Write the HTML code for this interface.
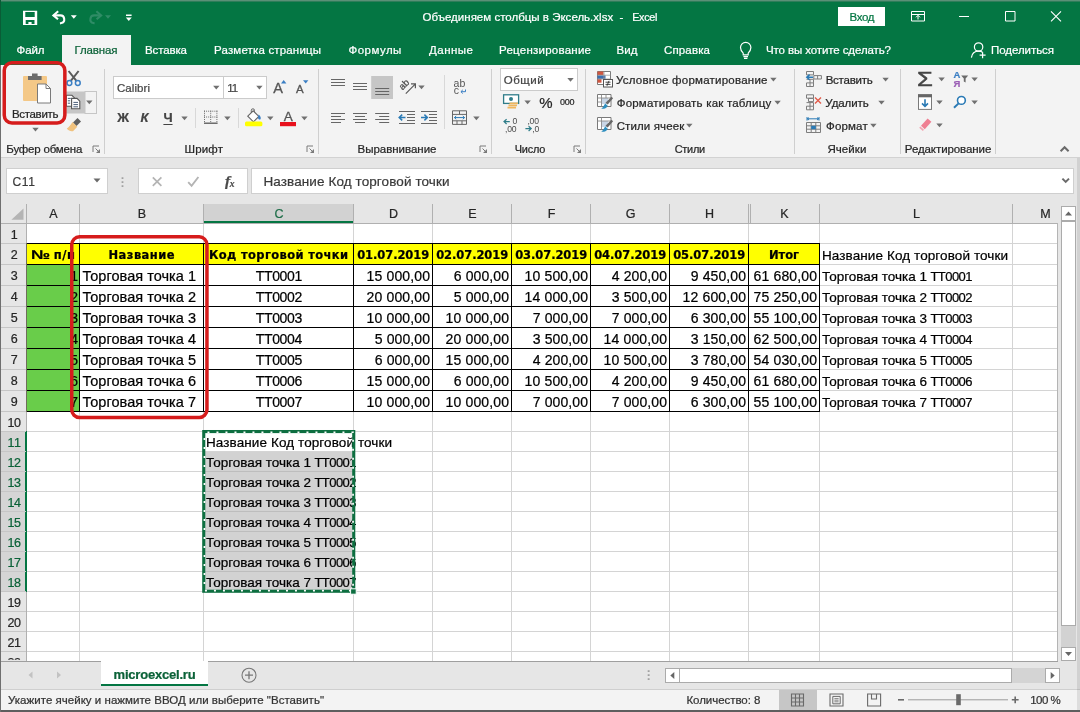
<!DOCTYPE html>
<html lang="ru">
<head>
<meta charset="utf-8">
<title>Объединяем столбцы в Эксель.xlsx - Excel</title>
<style>
html,body{margin:0;padding:0;}
body{width:1080px;height:712px;overflow:hidden;position:relative;background:#fff;font-family:"Liberation Sans",sans-serif;}
#app{position:absolute;left:0;top:0;width:1080px;height:712px;overflow:hidden;will-change:transform;}
#app div,#app svg,#app span.t{position:absolute;display:block;}
#app span.t{white-space:pre;-webkit-text-stroke:.22px currentColor;}
.ls{font-family:"Liberation Sans",sans-serif;}
.dj{font-family:"DejaVu Sans",sans-serif;}
.lserif{font-family:"Liberation Serif",serif;}
</style>
</head>
<body>
<div id="app">
<div style="left:0px;top:0px;width:1080px;height:65px;background:#047643;"></div>
<div style="left:0px;top:0px;width:1080px;height:1px;background:#5b9077;"></div>
<div style="left:0px;top:1px;width:1080px;height:1px;background:#2f7d5a;"></div>
<div style="left:62px;top:35px;width:69px;height:30px;background:#f3f3f3;"></div>
<span id="t1" class="t ls" style="top:9.2px;font-size:11.5px;line-height:16px;color:#fff;left:422.6px;"><span id="t1_0" style="letter-spacing:0.010px;">Объединяем столбцы в Эксель.xlsx  </span><span id="t1_1" style="letter-spacing:0.789px;">-  </span><span id="t1_2" style="font-size:10.8px;letter-spacing:-0.281px;">Excel</span></span>
<div style="left:838px;top:7px;width:47px;height:19px;background:#fff;"></div>
<span id="t2" class="t ls" style="top:9px;font-size:11.5px;line-height:16px;color:#047643;letter-spacing:-0.339px;left:862px;transform:translateX(-50%);margin-left:-0.170px;">Вход</span>
<span id="t3" class="t ls" style="top:41.5px;font-size:11.5px;line-height:16px;color:#fff;letter-spacing:-0.094px;left:16.5px;">Файл</span>
<span id="t4" class="t ls" style="top:41.5px;font-size:11.5px;line-height:16px;color:#0b6238;letter-spacing:-0.130px;left:74.5px;">Главная</span>
<span id="t5" class="t ls" style="top:41.5px;font-size:11.5px;line-height:16px;color:#fff;letter-spacing:-0.125px;left:145px;">Вставка</span>
<span id="t6" class="t ls" style="top:41.5px;font-size:11.5px;line-height:16px;color:#fff;letter-spacing:0.167px;left:214px;">Разметка страницы</span>
<span id="t7" class="t ls" style="top:41.5px;font-size:11.5px;line-height:16px;color:#fff;letter-spacing:0.492px;left:348.4px;">Формулы</span>
<span id="t8" class="t ls" style="top:41.5px;font-size:11.5px;line-height:16px;color:#fff;letter-spacing:0.487px;left:429px;">Данные</span>
<span id="t9" class="t ls" style="top:41.5px;font-size:11.5px;line-height:16px;color:#fff;letter-spacing:0.245px;left:499px;">Рецензирование</span>
<span id="t10" class="t ls" style="top:41.5px;font-size:11.5px;line-height:16px;color:#fff;left:616.6px;">Вид</span>
<span id="t11" class="t ls" style="top:41.5px;font-size:11.5px;line-height:16px;color:#fff;letter-spacing:0.146px;left:664px;">Справка</span>
<span id="t12" class="t ls" style="top:41.5px;font-size:11.5px;line-height:16px;color:#fff;letter-spacing:-0.102px;left:766px;">Что вы хотите сделать?</span>
<span id="t13" class="t ls" style="top:41.5px;font-size:11.5px;line-height:16px;color:#fff;letter-spacing:-0.057px;left:991px;">Поделиться</span>
<div style="left:0px;top:65px;width:1080px;height:93px;background:#f3f3f3;"></div>
<div style="left:0px;top:157px;width:1080px;height:1px;background:#d2d2d2;"></div>
<div style="left:104px;top:69px;width:1px;height:85px;background:#cfcfcf;"></div>
<div style="left:318px;top:69px;width:1px;height:85px;background:#cfcfcf;"></div>
<div style="left:491px;top:69px;width:1px;height:85px;background:#cfcfcf;"></div>
<div style="left:585px;top:69px;width:1px;height:85px;background:#cfcfcf;"></div>
<div style="left:794px;top:69px;width:1px;height:85px;background:#cfcfcf;"></div>
<div style="left:900px;top:69px;width:1px;height:85px;background:#cfcfcf;"></div>
<div style="left:995px;top:69px;width:1px;height:85px;background:#cfcfcf;"></div>
<div style="left:195px;top:108px;width:1px;height:20px;background:#d8d8d8;"></div>
<div style="left:238px;top:108px;width:1px;height:20px;background:#d8d8d8;"></div>
<div style="left:444px;top:75px;width:1px;height:54px;background:#d8d8d8;"></div>
<span id="t14" class="t ls" style="top:141px;font-size:11.5px;line-height:16px;color:#262626;letter-spacing:-0.196px;left:6.3px;">Буфер обмена</span>
<span id="t15" class="t ls" style="top:141px;font-size:11.5px;line-height:16px;color:#262626;letter-spacing:0.164px;left:184.5px;">Шрифт</span>
<span id="t16" class="t ls" style="top:141px;font-size:11.5px;line-height:16px;color:#262626;letter-spacing:-0.016px;left:357.5px;">Выравнивание</span>
<span id="t17" class="t ls" style="top:141px;font-size:10.93px;line-height:16px;color:#262626;letter-spacing:-0.230px;left:514.8px;">Число</span>
<span id="t18" class="t ls" style="top:141px;font-size:10.91px;line-height:16px;color:#262626;letter-spacing:-0.230px;left:674.7px;">Стили</span>
<span id="t19" class="t ls" style="top:141px;font-size:11.5px;line-height:16px;color:#262626;letter-spacing:0.084px;left:827.4px;">Ячейки</span>
<span id="t20" class="t ls" style="top:141px;font-size:11.5px;line-height:16px;color:#262626;letter-spacing:-0.085px;left:904.8px;">Редактирование</span>
<span id="t21" class="t ls" style="top:105.5px;font-size:11.5px;line-height:16px;color:#262626;letter-spacing:-0.321px;left:35.2px;transform:translateX(-50%);margin-left:-0.161px;">Вставить</span>
<div style="left:113px;top:76px;width:111px;height:23px;background:#fff;box-sizing:border-box;border:1px solid #cbcbcb;"></div>
<div style="left:223px;top:76px;width:44px;height:23px;background:#fff;box-sizing:border-box;border:1px solid #cbcbcb;"></div>
<span id="t22" class="t ls" style="top:79.7px;font-size:11.5px;line-height:16px;color:#444;letter-spacing:0.068px;left:117px;">Calibri</span>
<span id="t23" class="t ls" style="top:79.7px;font-size:11.5px;line-height:16px;color:#444;left:227.2px;letter-spacing:-0.9px;">11</span>
<span id="t24" class="t ls" style="top:79.6px;font-size:14.5px;line-height:16px;color:#555;left:273.2px;-webkit-text-stroke:.3px #555;">A</span>
<span id="t25" class="t ls" style="top:81.6px;font-size:11.5px;line-height:14px;color:#555;left:296px;-webkit-text-stroke:.3px #555;">A</span>
<span id="t26" class="t ls" style="top:108.8px;font-size:13px;line-height:18px;color:#444;font-weight:700;left:117.3px;">Ж</span>
<span id="t27" class="t ls" style="top:108.8px;font-size:13px;line-height:18px;color:#444;font-weight:700;font-style:italic;left:140.6px;">К</span>
<span id="t28" class="t ls" style="top:108.8px;font-size:13px;line-height:18px;color:#444;font-weight:700;left:163.4px;text-decoration:underline;text-underline-offset:1.5px;">Ч</span>
<span id="t29" class="t ls" style="top:109.3px;font-size:13.5px;line-height:16px;color:#555;left:288.3px;transform:translateX(-50%);-webkit-text-stroke:.3px #555;">A</span>
<div style="left:500px;top:68px;width:78px;height:23px;background:#fff;box-sizing:border-box;border:1px solid #cbcbcb;"></div>
<span id="t30" class="t ls" style="top:71.8px;font-size:11.5px;line-height:16px;color:#444;letter-spacing:0.539px;left:503.7px;">Общий</span>
<span id="t31" class="t ls" style="top:94.6px;font-size:15px;line-height:16px;color:#262626;left:545.8px;transform:translateX(-50%);">%</span>
<span id="t32" class="t ls" style="top:95.8px;font-size:9px;line-height:12px;color:#262626;letter-spacing:-0.266px;left:567.2px;transform:translateX(-50%);margin-left:-0.133px;">000</span>
<span id="t33" class="t ls" style="top:71.8px;font-size:11.5px;line-height:16px;color:#262626;letter-spacing:0.236px;left:616px;">Условное форматирование</span>
<span id="t34" class="t ls" style="top:95px;font-size:11.5px;line-height:16px;color:#262626;letter-spacing:0.203px;left:616.7px;">Форматировать как таблицу</span>
<span id="t35" class="t ls" style="top:118px;font-size:11.5px;line-height:16px;color:#262626;letter-spacing:0.113px;left:616.7px;">Стили ячеек</span>
<span id="t36" class="t ls" style="top:71.8px;font-size:11.5px;line-height:16px;color:#262626;letter-spacing:-0.250px;left:825.7px;">Вставить</span>
<span id="t37" class="t ls" style="top:95px;font-size:11.5px;line-height:16px;color:#262626;letter-spacing:-0.068px;left:825.3px;">Удалить</span>
<span id="t38" class="t ls" style="top:118px;font-size:11.5px;line-height:16px;color:#262626;letter-spacing:0.168px;left:826px;">Формат</span>
<span id="t39" class="t ls" style="top:67.9px;font-size:21px;line-height:22px;color:#444;left:924.6px;transform:translateX(-50%);transform:translateX(-50%) scaleX(1.22);-webkit-text-stroke:.5px #444;">Σ</span>
<span id="t40" class="t ls" style="top:69.6px;font-size:9.5px;line-height:10px;color:#3b7fc4;font-weight:700;left:957px;transform:translateX(-50%);">А</span>
<span id="t41" class="t ls" style="top:78.6px;font-size:9.5px;line-height:10px;color:#9b5fb5;font-weight:700;left:957px;transform:translateX(-50%);">Я</span>
<svg style="left:0px;top:0px;" width="1080" height="712" viewBox="0 0 1080 712"><path d="M23 10.8h14.2v14.2h-14.2z M25.3 12.1h9.4v4.9h-9.4z M25.7 20h8.8v4.1h-2.9v-2.1h-3.2v2.1h-2.7z" fill="#fff" fill-rule="evenodd"/><path d="M53.6 15.4h6.6a3.9 3.9 0 0 1 1 7.7l-1.2.3" fill="none" stroke="#fff" stroke-width="2.1"/><path d="M58.2 11.3l-4.8 4.1 4.6 3.9" fill="none" stroke="#fff" stroke-width="2.1"/><path d="M70.8 15.25h6l-3 3.5z" fill="#fff"/><path d="M101 15.4h-6.6a3.9 3.9 0 0 0-1 7.7l1.2.3" fill="none" stroke="#2f8c66" stroke-width="2.1"/><path d="M96.4 11.3l4.8 4.1-4.6 3.9" fill="none" stroke="#2f8c66" stroke-width="2.1"/><path d="M105 15.25h6l-3 3.5z" fill="#2f8c66"/><path d="M126 14.6h5.6v1.3h-5.6z" fill="#fff"/><path d="M125.8 17.5h6l-3 3.4z" fill="#fff"/><path d="M743.2 53.2c-1.6-1.6-2.7-3.4-2.7-5.6a5.2 5.2 0 0 1 10.4 0c0 2.2-1.1 4-2.7 5.6v1.6h-5z" fill="none" stroke="#fff" stroke-width="1.2"/><path d="M743.4 56.6h4.6M744 58.4h3.4" stroke="#fff" stroke-width="1.1"/><circle cx="978.6" cy="47" r="4.2" fill="none" stroke="#fff" stroke-width="1.2"/><path d="M971.4 57.6c0.6-4 3.4-6.4 7.2-6.4 1.6 0 3 .4 4.2 1.2" fill="none" stroke="#fff" stroke-width="1.2"/><path d="M982.6 52.2v6M979.6 55.2h6" stroke="#fff" stroke-width="1.2"/><path d="M911.5 11.5h13v9.5h-13z M911.5 14.5h13" fill="none" stroke="#fff" stroke-width="1"/><path d="M918 19.5v-4M916 17.3l2-2 2 2" fill="none" stroke="#fff" stroke-width="1"/><path d="M959 16.5h10" stroke="#fff" stroke-width="1"/><path d="M1005.5 11.5h9.5v9.5h-9.5z" fill="none" stroke="#fff" stroke-width="1"/><path d="M1051 11.3l10 10M1061 11.3l-10 10" stroke="#fff" stroke-width="1.1"/><path d="M93 152V146H99" fill="none" stroke="#7a7a7a" stroke-width="1"/><path d="M95.5 148.5L99 152" stroke="#7a7a7a" stroke-width="1"/><path d="M100 149V153H96z" fill="#7a7a7a"/><path d="M307 152V146H313" fill="none" stroke="#7a7a7a" stroke-width="1"/><path d="M309.5 148.5L313 152" stroke="#7a7a7a" stroke-width="1"/><path d="M314 149V153H310z" fill="#7a7a7a"/><path d="M480 152V146H486" fill="none" stroke="#7a7a7a" stroke-width="1"/><path d="M482.5 148.5L486 152" stroke="#7a7a7a" stroke-width="1"/><path d="M487 149V153H483z" fill="#7a7a7a"/><path d="M574 152V146H580" fill="none" stroke="#7a7a7a" stroke-width="1"/><path d="M576.5 148.5L580 152" stroke="#7a7a7a" stroke-width="1"/><path d="M581 149V153H577z" fill="#7a7a7a"/><path d="M1060.6 151.2l4-4 4 4" fill="none" stroke="#6a6a6a" stroke-width="2"/><rect x="23" y="76" width="24" height="25" rx="1" fill="#f4c887"/><path d="M28 80v-4h4v-2.6h5.6V76h4v4z" fill="#6b6b6b"/><path d="M37.5 84h8.5l4.5 4.5V103h-13z" fill="#fff" stroke="#7a7a7a" stroke-width="1"/><path d="M46 84v4.5h4.5" fill="none" stroke="#7a7a7a" stroke-width="1"/><path d="M32.3 127.85h6.4l-3.2 3.7z" fill="#707070"/><path d="M68.6 71l8.2 10.4M78.6 71l-8.2 10.4" stroke="#5a5a5a" stroke-width="2" fill="none"/><circle cx="69.4" cy="83" r="2.4" fill="#f3f3f3" stroke="#3b7fc4" stroke-width="1.5"/><circle cx="77.8" cy="83" r="2.4" fill="#f3f3f3" stroke="#3b7fc4" stroke-width="1.5"/><rect x="65.5" y="91.5" width="19.5" height="22" fill="#c6c6c6"/><rect x="85" y="91.5" width="11.5" height="22" fill="#f3f3f3" stroke="#c6c6c6" stroke-width="1"/><path d="M66.3 95.3h5.6l2.4 2.4v8.6h-8z" fill="#fff" stroke="#555" stroke-width="1.1"/><path d="M71.6 98.4h5.4l2.8 2.8v7.6h-8.2z" fill="#fff" stroke="#555" stroke-width="1.1"/><path d="M67.8 98.4h3M67.8 100.8h2.4M67.8 103.2h2.4M73.4 102.4h4.6M73.4 104.6h4.6M73.4 106.8h4.6" stroke="#4a5f7a" stroke-width="1"/><path d="M86.1 100.45h6.4l-3.2 3.7z" fill="#707070"/><path d="M77.5 118l3.5 3.5-4.5 4.5-3.5-3.5z" fill="#5f5f5f"/><path d="M72.5 122l4.8 4.8-4.3 4.4c-2 .6-4.6-.4-6.2-2.6 2-1.2 3.6-3.4 5.7-6.6z" fill="#f0c27e"/><path d="M213.1 85.85h6.4l-3.2 3.7z" fill="#707070"/><path d="M256.2 85.85h6.4l-3.2 3.7z" fill="#707070"/><path d="M281 83.5h5.4l-2.7-3.4z" fill="#3b7fc4"/><path d="M303 80.2h5.4l-2.7 3.4z" fill="#3b7fc4"/><path d="M181.3 116.45h6.4l-3.2 3.7z" fill="#707070"/><path d="M204 111.2h13.4M204 117h13.4M204.5 110.7v12M210.7 110.7v12M216.9 110.7v12" fill="none" stroke="#6e6e6e" stroke-width="1" stroke-dasharray="1 1.07"/><path d="M204 123.2h13.6" stroke="#555" stroke-width="1.3"/><path d="M224.2 116.45h6.4l-3.2 3.7z" fill="#707070"/><path d="M247.8 116.2l5.4-5.4 5.6 5.6-5.4 5.4z" fill="#fff" stroke="#666" stroke-width="1.1"/><path d="M251.3 112.6v-2.2a1.6 1.6 0 0 1 3.2 0v1.4" fill="none" stroke="#666" stroke-width="1"/><path d="M258.6 114.6c1.6 1.4 2.6 3 2 4.4-.8 1-2.4.4-2.6-1z" fill="#3b7fc4"/><rect x="245" y="121.6" width="17.4" height="4.6" rx="1.5" fill="#ffff00"/><path d="M267.1 116.45h6.4l-3.2 3.7z" fill="#707070"/><rect x="280" y="122" width="16" height="4.2" fill="#e8101c"/><path d="M301.2 116.45h6.4l-3.2 3.7z" fill="#707070"/><path d="M331 79.5h14" stroke="#666" stroke-width="1"/><path d="M331 82.5h14" stroke="#666" stroke-width="1"/><path d="M331 85.5h14" stroke="#666" stroke-width="1"/><path d="M353 83.5h14" stroke="#666" stroke-width="1"/><path d="M353 86.5h14" stroke="#666" stroke-width="1"/><path d="M353 89.5h14" stroke="#666" stroke-width="1"/><rect x="371.2" y="76" width="21.8" height="23" fill="#c6c6c6"/><path d="M375.2 88.5h14" stroke="#666" stroke-width="1"/><path d="M375.2 91.5h14" stroke="#666" stroke-width="1"/><path d="M375.2 94.5h14" stroke="#666" stroke-width="1"/><path d="M331 113.5h14" stroke="#666" stroke-width="1"/><path d="M331 116.5h10" stroke="#666" stroke-width="1"/><path d="M331 119.5h14" stroke="#666" stroke-width="1"/><path d="M331 122.5h10" stroke="#666" stroke-width="1"/><path d="M353 113.5h14" stroke="#666" stroke-width="1"/><path d="M355 116.5h10" stroke="#666" stroke-width="1"/><path d="M353 119.5h14" stroke="#666" stroke-width="1"/><path d="M355 122.5h10" stroke="#666" stroke-width="1"/><path d="M375.2 113.5h14" stroke="#666" stroke-width="1"/><path d="M379.2 116.5h10" stroke="#666" stroke-width="1"/><path d="M375.2 119.5h14" stroke="#666" stroke-width="1"/><path d="M379.2 122.5h10" stroke="#666" stroke-width="1"/><text transform="translate(402.6 90.6) rotate(-45)" font-family="Liberation Sans,sans-serif" font-size="9.5" fill="#4a4a4a" stroke="#4a4a4a" stroke-width=".25">ab</text><path d="M405.8 93.6l9.4-9.4M411 83.8h4.4v4.4" fill="none" stroke="#5a5a5a" stroke-width="1.2"/><path d="M418.3 85.45h6.4l-3.2 3.7z" fill="#707070"/><text x="453.6" y="87" font-family="Liberation Sans,sans-serif" font-size="10.5" fill="#555">ab</text><text x="453.8" y="94" font-family="Liberation Sans,sans-serif" font-size="10.5" fill="#555">c</text><path d="M465.5 89.5v2.2h-4.5M462.8 89.9l-1.9 1.8 1.9 1.8" fill="none" stroke="#3b7fc4" stroke-width="1"/><path d="M399 111.5h16M407 114.5h8M407 117.5h8M407 120.5h8M399 123.5h16" stroke="#666" stroke-width="1"/><path d="M405.5 117.5h-6M402.2 114.6l-3 2.9 3 2.9" fill="none" stroke="#2a7ab5" stroke-width="1.5"/><path d="M421 111.5h16M429 114.5h8M429 117.5h8M429 120.5h8M421 123.5h16" stroke="#666" stroke-width="1"/><path d="M421 117.5h6M424.4 114.6l3 2.9-3 2.9" fill="none" stroke="#2a7ab5" stroke-width="1.5"/><path d="M452.5 110.8h14v13.6h-14zM452.5 114.4h14M452.5 120.8h14M459.5 110.8v3.6M457 120.8v3.6M462 120.8v3.6" fill="none" stroke="#666" stroke-width="1"/><path d="M454.5 117.6h10M456.2 116l-1.8 1.6 1.8 1.6M462.8 116l1.8 1.6-1.8 1.6" fill="none" stroke="#2a7ab5" stroke-width="1"/><path d="M473.2 116.45h6.4l-3.2 3.7z" fill="#707070"/><path d="M567.3 77.95h6.4l-3.2 3.7z" fill="#707070"/><rect x="503.6" y="94.8" width="15" height="8.6" fill="#fff" stroke="#2f7d89" stroke-width="1.3"/><circle cx="511" cy="99" r="2" fill="#2f7d89"/><path d="M509.5 103.2h8.5M508.5 105.4h8.5M507.5 107.6h8.5" stroke="#f0b75e" stroke-width="1.6"/><path d="M524.4 100.45h6.4l-3.2 3.7z" fill="#707070"/><g font-family="Liberation Sans,sans-serif" font-size="8.6" fill="#4a4a4a" letter-spacing="-.2"><text x="512.4" y="124.4">0</text><text x="505" y="131.6">,00</text><text x="527.4" y="124.4">,00</text><text x="532.2" y="131.6">,0</text></g><path d="M509.8 121.6h-5.6M506.6 119.2l-2.6 2.4 2.6 2.4" fill="none" stroke="#2f7d89" stroke-width="1.2"/><path d="M525.4 128.6h5.6M528.6 126.2l2.6 2.4-2.6 2.4" fill="none" stroke="#2f7d89" stroke-width="1.2"/><path d="M770.2 77.75h6.4l-3.2 3.7z" fill="#707070"/><path d="M774.4 100.75h6.4l-3.2 3.7z" fill="#707070"/><path d="M686.1 123.75h6.4l-3.2 3.7z" fill="#707070"/><path d="M597.5 71.5h13v13h-13z" fill="#fff" stroke="#7a7a7a"/><rect x="597.5" y="71.5" width="6" height="3.6" fill="#d0563f"/><rect x="597.5" y="75.3" width="8" height="3.6" fill="#3b6fb0"/><rect x="597.5" y="79.1" width="4" height="3.6" fill="#d0563f"/><path d="M604 71.5v13M597.5 75.2h13M597.5 79h13" stroke="#9a9a9a" stroke-width=".8" fill="none"/><rect x="603.5" y="79.5" width="9" height="7.5" fill="#fff" stroke="#555"/><path d="M605.5 82.2h5M605.5 84.4h5M609 80.8l-2 5" stroke="#333" stroke-width=".9"/><path d="M597.5 94.5h13.5v12h-13.5z" fill="#fff" stroke="#7a7a7a"/><rect x="601" y="98.0" width="7" height="6" fill="#c9d6e6"/><path d="M597.5 98.0h13.5M601.5 94.5v12M606 94.5v3.5M597.5 102.0h4" stroke="#8a8a8a" stroke-width=".9" fill="none"/><path d="M611.5 96.7l1.6 1.6-5.4 6.2-2.2-1.8z" fill="#666"/><path d="M605.2 103.5l2.6 2.2c-1.4 2.6-4.2 3.6-6.6 3 1.8-1.2 2.6-3 4-5.2z" fill="#2f8fbf"/><path d="M597.5 117.5h13.5v12h-13.5z" fill="#fff" stroke="#7a7a7a"/><rect x="601" y="121.0" width="7" height="6" fill="#c9d6e6"/><path d="M597.5 121.0h13.5M601.5 117.5v12" stroke="#8a8a8a" stroke-width=".9" fill="none"/><path d="M611.5 119.7l1.6 1.6-5.4 6.2-2.2-1.8z" fill="#666"/><path d="M605.2 126.5l2.6 2.2c-1.4 2.6-4.2 3.6-6.6 3 1.8-1.2 2.6-3 4-5.2z" fill="#2f8fbf"/><path d="M882.4 77.75h6.4l-3.2 3.7z" fill="#707070"/><path d="M878.3 100.75h6.4l-3.2 3.7z" fill="#707070"/><path d="M870.2 123.75h6.4l-3.2 3.7z" fill="#707070"/><path d="M806.5 71.5h7v3.4h-7zM806.5 79.3h7v3.6h-7v3.6h7v-3.6M810 79.3v7.2M813.8 75.6h7.6v3.4h-7.6zM817.6 75.6v3.4" fill="none" stroke="#7d7d7d" stroke-width="1"/><path d="M813 77.2h-6M809.6 74.6l-2.8 2.6 2.8 2.6" fill="none" stroke="#2a7ab5" stroke-width="1.5"/><path d="M806.5 94.8h7v3.4h-7zM806.5 102.6h7v3.6h-7v3.6h7v-3.6M810 102.6v7.2M808.5 98.4h5v3.2h-5z" fill="none" stroke="#7d7d7d" stroke-width="1"/><path d="M815 97.6l6 6M821 97.6l-6 6" stroke="#e25b4a" stroke-width="1.4"/><path d="M806.5 122.5h14v10h-14zM806.5 125.8h14M806.5 129.2h14M811.2 122.5v10M815.8 122.5v10" fill="none" stroke="#7d7d7d" stroke-width="1"/><rect x="811.2" y="125.8" width="4.6" height="3.4" fill="#2a7ab5"/><path d="M807 118.8h12M807 117v3.6M819 117v3.6M809 117.6l-1.6 1.2 1.6 1.2M817 117.6l1.6 1.2-1.6 1.2" fill="none" stroke="#2a7ab5" stroke-width="1"/><path d="M938.4 77.55h6.4l-3.2 3.7z" fill="#707070"/><path d="M961.2 75.4h7l-2.6 3v4l-1.8-1v-3z" fill="#6a6a6a"/><path d="M971.4 77.55h6.4l-3.2 3.7z" fill="#707070"/><rect x="918.5" y="94.8" width="13" height="14.6" fill="#fff" stroke="#7a7a7a"/><rect x="918" y="94.3" width="14" height="3" fill="#666"/><path d="M925 99.2v7M922 103.4l3 3 3-3" fill="none" stroke="#2a7ab5" stroke-width="1.6"/><path d="M936.3 100.45h6.4l-3.2 3.7z" fill="#707070"/><circle cx="961.4" cy="100.4" r="3.9" fill="#fff" stroke="#2a7ab5" stroke-width="1.6"/><path d="M958.6 103.4l-4.6 4.4" stroke="#2a7ab5" stroke-width="2"/><path d="M971.4 100.45h6.4l-3.2 3.7z" fill="#707070"/><path d="M927.6 118.4l3.8 3.4-6.6 7.4-3.8-3.4z" fill="#ef7f92"/><path d="M920.4 126.6l3.6 3.2-1.2 1.2-3.6-3.2z" fill="#f3a5b2"/><path d="M936.3 123.55h6.4l-3.2 3.7z" fill="#707070"/></svg>
<div style="left:0px;top:158px;width:1080px;height:46px;background:#e6e6e6;"></div>
<div style="left:6px;top:168px;width:102px;height:25.5px;background:#fff;box-sizing:border-box;border:1px solid #cfcfcf;"></div>
<span id="t42" class="t ls" style="top:173.5px;font-size:12px;line-height:17px;color:#3a3a3a;letter-spacing:0.688px;left:12.5px;">C11</span>
<div style="left:138px;top:168px;width:110px;height:25.5px;background:#fff;box-sizing:border-box;border:1px solid #cfcfcf;"></div>
<div style="left:251px;top:168px;width:823px;height:25.5px;background:#fff;box-sizing:border-box;border:1px solid #cfcfcf;"></div>
<span id="t43" class="t ls" style="top:172px;font-size:13.5px;line-height:19px;color:#3a3a3a;letter-spacing:0.096px;left:263.5px;">Название Код торговой точки</span>
<svg style="left:0px;top:158px;" width="1080" height="46" viewBox="0 0 1080 46"><path d="M93.5 20.5h7l-3.5 4z" fill="#6a6a6a"/><path d="M121.6 19.3h1.8v1.8h-1.8zM121.6 23.3h1.8v1.8h-1.8zM121.6 27.3h1.8v1.8h-1.8z" fill="#a0a0a0"/><path d="M152.8 19.3l8.6 8.6M161.4 19.3l-8.6 8.6" stroke="#b4b4b4" stroke-width="1.7"/><path d="M188.2 24.2l3.4 3.6 6.8-8.8" fill="none" stroke="#b4b4b4" stroke-width="1.9"/><path d="M1062.4 20.6l3.3 3.3 3.3-3.3" fill="none" stroke="#6a6a6a" stroke-width="2"/></svg>
<span id="t44" class="t lserif" style="top:171.6px;font-size:15.5px;line-height:18px;color:#4a4a4a;font-weight:700;font-style:italic;left:227.6px;transform:translateX(-50%);">f</span>
<span id="t45" class="t lserif" style="top:177.6px;font-size:9.5px;line-height:12px;color:#4a4a4a;font-weight:700;font-style:italic;left:232.2px;transform:translateX(-50%);">x</span>
<div style="left:0px;top:204px;width:1060px;height:457px;background:#fff;"></div>
<div style="left:0px;top:204px;width:1060px;height:19px;background:#e6e6e6;"></div>
<div style="left:0px;top:204px;width:26px;height:457px;background:#e6e6e6;"></div>
<div style="left:204px;top:204px;width:150px;height:19px;background:#d2d2d2;"></div>
<div style="left:204px;top:221px;width:150px;height:2px;background:#047643;"></div>
<div style="left:0px;top:432px;width:26px;height:159px;background:#d5d5d5;"></div>
<div style="left:0px;top:223px;width:1060px;height:1px;background:#b0b0b0;"></div>
<div style="left:26px;top:204px;width:1px;height:457px;background:#b0b0b0;"></div>
<div style="left:25px;top:431px;width:2px;height:161px;background:#047643;"></div>
<div style="left:79px;top:204px;width:1px;height:19px;background:#b0b0b0;"></div>
<div style="left:203px;top:204px;width:1px;height:19px;background:#b0b0b0;"></div>
<div style="left:353px;top:204px;width:1px;height:19px;background:#b0b0b0;"></div>
<div style="left:432px;top:204px;width:1px;height:19px;background:#b0b0b0;"></div>
<div style="left:511px;top:204px;width:1px;height:19px;background:#b0b0b0;"></div>
<div style="left:590px;top:204px;width:1px;height:19px;background:#b0b0b0;"></div>
<div style="left:669px;top:204px;width:1px;height:19px;background:#b0b0b0;"></div>
<div style="left:748px;top:204px;width:1px;height:19px;background:#b0b0b0;"></div>
<div style="left:819px;top:204px;width:1px;height:19px;background:#b0b0b0;"></div>
<div style="left:1012px;top:204px;width:1px;height:19px;background:#b0b0b0;"></div>
<div style="left:750px;top:204px;width:1px;height:19px;background:#b0b0b0;"></div>
<div style="left:27px;top:243px;width:1032px;height:1px;background:#d4d4d4;"></div>
<div style="left:0px;top:243px;width:26px;height:1px;background:#c6c6c6;"></div>
<div style="left:27px;top:264px;width:1032px;height:1px;background:#d4d4d4;"></div>
<div style="left:0px;top:264px;width:26px;height:1px;background:#c6c6c6;"></div>
<div style="left:27px;top:285px;width:1032px;height:1px;background:#d4d4d4;"></div>
<div style="left:0px;top:285px;width:26px;height:1px;background:#c6c6c6;"></div>
<div style="left:27px;top:306px;width:1032px;height:1px;background:#d4d4d4;"></div>
<div style="left:0px;top:306px;width:26px;height:1px;background:#c6c6c6;"></div>
<div style="left:27px;top:327px;width:1032px;height:1px;background:#d4d4d4;"></div>
<div style="left:0px;top:327px;width:26px;height:1px;background:#c6c6c6;"></div>
<div style="left:27px;top:348px;width:1032px;height:1px;background:#d4d4d4;"></div>
<div style="left:0px;top:348px;width:26px;height:1px;background:#c6c6c6;"></div>
<div style="left:27px;top:369px;width:1032px;height:1px;background:#d4d4d4;"></div>
<div style="left:0px;top:369px;width:26px;height:1px;background:#c6c6c6;"></div>
<div style="left:27px;top:390px;width:1032px;height:1px;background:#d4d4d4;"></div>
<div style="left:0px;top:390px;width:26px;height:1px;background:#c6c6c6;"></div>
<div style="left:27px;top:411px;width:1032px;height:1px;background:#d4d4d4;"></div>
<div style="left:0px;top:411px;width:26px;height:1px;background:#c6c6c6;"></div>
<div style="left:27px;top:431px;width:1032px;height:1px;background:#d4d4d4;"></div>
<div style="left:0px;top:431px;width:26px;height:1px;background:#c6c6c6;"></div>
<div style="left:27px;top:451px;width:1032px;height:1px;background:#d4d4d4;"></div>
<div style="left:0px;top:451px;width:26px;height:1px;background:#c6c6c6;"></div>
<div style="left:27px;top:471px;width:1032px;height:1px;background:#d4d4d4;"></div>
<div style="left:0px;top:471px;width:26px;height:1px;background:#c6c6c6;"></div>
<div style="left:27px;top:491px;width:1032px;height:1px;background:#d4d4d4;"></div>
<div style="left:0px;top:491px;width:26px;height:1px;background:#c6c6c6;"></div>
<div style="left:27px;top:511px;width:1032px;height:1px;background:#d4d4d4;"></div>
<div style="left:0px;top:511px;width:26px;height:1px;background:#c6c6c6;"></div>
<div style="left:27px;top:531px;width:1032px;height:1px;background:#d4d4d4;"></div>
<div style="left:0px;top:531px;width:26px;height:1px;background:#c6c6c6;"></div>
<div style="left:27px;top:551px;width:1032px;height:1px;background:#d4d4d4;"></div>
<div style="left:0px;top:551px;width:26px;height:1px;background:#c6c6c6;"></div>
<div style="left:27px;top:571px;width:1032px;height:1px;background:#d4d4d4;"></div>
<div style="left:0px;top:571px;width:26px;height:1px;background:#c6c6c6;"></div>
<div style="left:27px;top:591px;width:1032px;height:1px;background:#d4d4d4;"></div>
<div style="left:0px;top:591px;width:26px;height:1px;background:#c6c6c6;"></div>
<div style="left:27px;top:611px;width:1032px;height:1px;background:#d4d4d4;"></div>
<div style="left:0px;top:611px;width:26px;height:1px;background:#c6c6c6;"></div>
<div style="left:27px;top:631px;width:1032px;height:1px;background:#d4d4d4;"></div>
<div style="left:0px;top:631px;width:26px;height:1px;background:#c6c6c6;"></div>
<div style="left:27px;top:651px;width:1032px;height:1px;background:#d4d4d4;"></div>
<div style="left:0px;top:651px;width:26px;height:1px;background:#c6c6c6;"></div>
<div style="left:79px;top:224px;width:1px;height:437px;background:#d4d4d4;"></div>
<div style="left:203px;top:224px;width:1px;height:437px;background:#d4d4d4;"></div>
<div style="left:353px;top:224px;width:1px;height:437px;background:#d4d4d4;"></div>
<div style="left:432px;top:224px;width:1px;height:437px;background:#d4d4d4;"></div>
<div style="left:511px;top:224px;width:1px;height:437px;background:#d4d4d4;"></div>
<div style="left:590px;top:224px;width:1px;height:437px;background:#d4d4d4;"></div>
<div style="left:669px;top:224px;width:1px;height:437px;background:#d4d4d4;"></div>
<div style="left:748px;top:224px;width:1px;height:437px;background:#d4d4d4;"></div>
<div style="left:819px;top:224px;width:1px;height:437px;background:#d4d4d4;"></div>
<div style="left:1012px;top:224px;width:1px;height:437px;background:#d4d4d4;"></div>
<span id="t46" class="t ls" style="top:205px;font-size:12.5px;line-height:18px;color:#262626;left:53.5px;transform:translateX(-50%);">A</span>
<span id="t47" class="t ls" style="top:205px;font-size:12.5px;line-height:18px;color:#262626;left:142px;transform:translateX(-50%);">B</span>
<span id="t48" class="t ls" style="top:205px;font-size:12.5px;line-height:18px;color:#1f6e49;left:279px;transform:translateX(-50%);">C</span>
<span id="t49" class="t ls" style="top:205px;font-size:12.5px;line-height:18px;color:#262626;left:393.5px;transform:translateX(-50%);">D</span>
<span id="t50" class="t ls" style="top:205px;font-size:12.5px;line-height:18px;color:#262626;left:472.5px;transform:translateX(-50%);">E</span>
<span id="t51" class="t ls" style="top:205px;font-size:12.5px;line-height:18px;color:#262626;left:551.5px;transform:translateX(-50%);">F</span>
<span id="t52" class="t ls" style="top:205px;font-size:12.5px;line-height:18px;color:#262626;left:630.5px;transform:translateX(-50%);">G</span>
<span id="t53" class="t ls" style="top:205px;font-size:12.5px;line-height:18px;color:#262626;left:709.5px;transform:translateX(-50%);">H</span>
<span id="t54" class="t ls" style="top:205px;font-size:12.5px;line-height:18px;color:#262626;left:784.5px;transform:translateX(-50%);">K</span>
<span id="t55" class="t ls" style="top:205px;font-size:12.5px;line-height:18px;color:#262626;left:916.5px;transform:translateX(-50%);">L</span>
<span id="t56" class="t ls" style="top:205px;font-size:12.5px;line-height:18px;color:#262626;left:1045.5px;transform:translateX(-50%);">M</span>
<span id="t57" class="t ls" style="top:225.8px;font-size:12.5px;line-height:18px;color:#262626;left:14.2px;transform:translateX(-50%);">1</span>
<span id="t58" class="t ls" style="top:246.3px;font-size:12.5px;line-height:18px;color:#262626;left:14.2px;transform:translateX(-50%);">2</span>
<span id="t59" class="t ls" style="top:267.3px;font-size:12.5px;line-height:18px;color:#262626;left:14.2px;transform:translateX(-50%);">3</span>
<span id="t60" class="t ls" style="top:288.3px;font-size:12.5px;line-height:18px;color:#262626;left:14.2px;transform:translateX(-50%);">4</span>
<span id="t61" class="t ls" style="top:309.3px;font-size:12.5px;line-height:18px;color:#262626;left:14.2px;transform:translateX(-50%);">5</span>
<span id="t62" class="t ls" style="top:330.3px;font-size:12.5px;line-height:18px;color:#262626;left:14.2px;transform:translateX(-50%);">6</span>
<span id="t63" class="t ls" style="top:351.3px;font-size:12.5px;line-height:18px;color:#262626;left:14.2px;transform:translateX(-50%);">7</span>
<span id="t64" class="t ls" style="top:372.3px;font-size:12.5px;line-height:18px;color:#262626;left:14.2px;transform:translateX(-50%);">8</span>
<span id="t65" class="t ls" style="top:393.3px;font-size:12.5px;line-height:18px;color:#262626;left:14.2px;transform:translateX(-50%);">9</span>
<span id="t66" class="t ls" style="top:413.8px;font-size:12.5px;line-height:18px;color:#262626;letter-spacing:-0.606px;left:14.2px;transform:translateX(-50%);margin-left:-0.303px;">10</span>
<span id="t67" class="t ls" style="top:433.8px;font-size:12.5px;line-height:18px;color:#0b6238;letter-spacing:0.316px;left:14.2px;transform:translateX(-50%);margin-left:0.158px;">11</span>
<span id="t68" class="t ls" style="top:453.8px;font-size:12.5px;line-height:18px;color:#0b6238;letter-spacing:-0.606px;left:14.2px;transform:translateX(-50%);margin-left:-0.303px;">12</span>
<span id="t69" class="t ls" style="top:473.8px;font-size:12.5px;line-height:18px;color:#0b6238;letter-spacing:-0.606px;left:14.2px;transform:translateX(-50%);margin-left:-0.303px;">13</span>
<span id="t70" class="t ls" style="top:493.8px;font-size:12.5px;line-height:18px;color:#0b6238;letter-spacing:-0.606px;left:14.2px;transform:translateX(-50%);margin-left:-0.303px;">14</span>
<span id="t71" class="t ls" style="top:513.8px;font-size:12.5px;line-height:18px;color:#0b6238;letter-spacing:-0.606px;left:14.2px;transform:translateX(-50%);margin-left:-0.303px;">15</span>
<span id="t72" class="t ls" style="top:533.8px;font-size:12.5px;line-height:18px;color:#0b6238;letter-spacing:-0.606px;left:14.2px;transform:translateX(-50%);margin-left:-0.303px;">16</span>
<span id="t73" class="t ls" style="top:553.8px;font-size:12.5px;line-height:18px;color:#0b6238;letter-spacing:-0.606px;left:14.2px;transform:translateX(-50%);margin-left:-0.303px;">17</span>
<span id="t74" class="t ls" style="top:573.8px;font-size:12.5px;line-height:18px;color:#0b6238;letter-spacing:-0.606px;left:14.2px;transform:translateX(-50%);margin-left:-0.303px;">18</span>
<span id="t75" class="t ls" style="top:593.8px;font-size:12.5px;line-height:18px;color:#262626;letter-spacing:-0.606px;left:14.2px;transform:translateX(-50%);margin-left:-0.303px;">19</span>
<span id="t76" class="t ls" style="top:613.8px;font-size:12.5px;line-height:18px;color:#262626;letter-spacing:-0.606px;left:14.2px;transform:translateX(-50%);margin-left:-0.303px;">20</span>
<span id="t77" class="t ls" style="top:633.8px;font-size:12.5px;line-height:18px;color:#262626;letter-spacing:-0.606px;left:14.2px;transform:translateX(-50%);margin-left:-0.303px;">21</span>
<span id="t78" class="t ls" style="top:653.8px;font-size:12.5px;line-height:18px;color:#262626;letter-spacing:-0.606px;left:14.2px;transform:translateX(-50%);margin-left:-0.303px;clip-path:inset(0 0 12px 0);">22</span>
<svg style="left:8px;top:207px;" width="16" height="14" viewBox="0 0 16 14"><path d="M15.5 1.5V12.7H3.4Z" fill="#b4b4b4"/></svg>
<div style="left:27px;top:244px;width:793px;height:21px;background:#ffff00;"></div>
<div style="left:27px;top:265px;width:53px;height:146px;background:#69cd4a;"></div>
<div style="left:26px;top:243px;width:794px;height:1px;background:#000;"></div>
<div style="left:26px;top:264px;width:794px;height:1px;background:#000;"></div>
<div style="left:26px;top:285px;width:794px;height:1px;background:#000;"></div>
<div style="left:26px;top:306px;width:794px;height:1px;background:#000;"></div>
<div style="left:26px;top:327px;width:794px;height:1px;background:#000;"></div>
<div style="left:26px;top:348px;width:794px;height:1px;background:#000;"></div>
<div style="left:26px;top:369px;width:794px;height:1px;background:#000;"></div>
<div style="left:26px;top:390px;width:794px;height:1px;background:#000;"></div>
<div style="left:26px;top:411px;width:794px;height:1px;background:#000;"></div>
<div style="left:26px;top:243px;width:1px;height:169px;background:#6e6e5a;"></div>
<div style="left:79px;top:243px;width:1px;height:169px;background:#000;"></div>
<div style="left:203px;top:243px;width:1px;height:169px;background:#000;"></div>
<div style="left:353px;top:243px;width:1px;height:169px;background:#000;"></div>
<div style="left:432px;top:243px;width:1px;height:169px;background:#000;"></div>
<div style="left:511px;top:243px;width:1px;height:169px;background:#000;"></div>
<div style="left:590px;top:243px;width:1px;height:169px;background:#000;"></div>
<div style="left:669px;top:243px;width:1px;height:169px;background:#000;"></div>
<div style="left:748px;top:243px;width:1px;height:169px;background:#000;"></div>
<div style="left:819px;top:243px;width:1px;height:169px;background:#000;"></div>
<span id="t79" class="t dj" style="top:247.2px;font-size:11.5px;line-height:16px;color:#000;font-weight:700;left:30.6px;"><span id="t79_0" style="font-size:12.6px;font-family:'Liberation Sans',sans-serif;display:inline-block;width:18.8px;transform:scaleX(1.36);transform-origin:0 50%;">№</span><span id="t79_1" style="letter-spacing:0.384px;"> </span><span id="t79_2" style="letter-spacing:0.502px;">п/п</span></span>
<span id="t80" class="t dj" style="top:247.2px;font-size:11.5px;line-height:16px;color:#000;font-weight:700;letter-spacing:0.440px;left:141.5px;transform:translateX(-50%);margin-left:0.220px;">Название</span>
<span id="t81" class="t dj" style="top:247.2px;font-size:11.5px;line-height:16px;color:#000;font-weight:700;letter-spacing:0.360px;left:278.5px;transform:translateX(-50%);margin-left:0.180px;">Код торговой точки</span>
<span id="t82" class="t dj" style="top:247.2px;font-size:11.5px;line-height:16px;color:#000;font-weight:700;letter-spacing:-0.085px;left:393.2px;transform:translateX(-50%);margin-left:-0.043px;">01.07.2019</span>
<span id="t83" class="t dj" style="top:247.2px;font-size:11.5px;line-height:16px;color:#000;font-weight:700;letter-spacing:-0.085px;left:472.2px;transform:translateX(-50%);margin-left:-0.043px;">02.07.2019</span>
<span id="t84" class="t dj" style="top:247.2px;font-size:11.5px;line-height:16px;color:#000;font-weight:700;letter-spacing:-0.085px;left:551.2px;transform:translateX(-50%);margin-left:-0.043px;">03.07.2019</span>
<span id="t85" class="t dj" style="top:247.2px;font-size:11.5px;line-height:16px;color:#000;font-weight:700;letter-spacing:-0.085px;left:630.2px;transform:translateX(-50%);margin-left:-0.043px;">04.07.2019</span>
<span id="t86" class="t dj" style="top:247.2px;font-size:11.5px;line-height:16px;color:#000;font-weight:700;letter-spacing:-0.085px;left:709.2px;transform:translateX(-50%);margin-left:-0.043px;">05.07.2019</span>
<span id="t87" class="t dj" style="top:247.2px;font-size:11.5px;line-height:16px;color:#000;font-weight:700;letter-spacing:-0.068px;left:784px;transform:translateX(-50%);margin-left:-0.034px;">Итог</span>
<span id="t88" class="t ls" style="top:246.3px;font-size:13.5px;line-height:19px;color:#000;letter-spacing:0.096px;left:822px;">Название Код торговой точки</span>
<span id="t89" class="t ls" style="top:266px;font-size:14px;line-height:20px;color:#000;right:1002px;">1</span>
<span id="t90" class="t ls" style="top:266px;font-size:14.5px;line-height:20px;color:#000;letter-spacing:0.034px;left:82.5px;">Торговая точка 1</span>
<span id="t91" class="t ls" style="top:266px;font-size:14px;line-height:20px;color:#000;letter-spacing:-0.350px;left:279px;transform:translateX(-50%);margin-left:-0.175px;">TT0001</span>
<span id="t92" class="t ls" style="top:266px;font-size:14px;line-height:20px;color:#000;letter-spacing:0.138px;right:649.862px;">15 000,00</span>
<span id="t93" class="t ls" style="top:266px;font-size:14px;line-height:20px;color:#000;letter-spacing:0.100px;right:570.9px;">6 000,00</span>
<span id="t94" class="t ls" style="top:266px;font-size:14px;line-height:20px;color:#000;letter-spacing:0.138px;right:491.862px;">10 500,00</span>
<span id="t95" class="t ls" style="top:266px;font-size:14px;line-height:20px;color:#000;letter-spacing:0.100px;right:412.9px;">4 200,00</span>
<span id="t96" class="t ls" style="top:266px;font-size:14px;line-height:20px;color:#000;letter-spacing:0.100px;right:333.9px;">9 450,00</span>
<span id="t97" class="t ls" style="top:266px;font-size:14px;line-height:20px;color:#000;letter-spacing:0.138px;right:262.862px;">61 680,00</span>
<span id="t98" class="t ls" style="top:267.3px;font-size:13.5px;line-height:19px;color:#000;left:822px;"><span id="t98_0" style="letter-spacing:-0.018px;">Торговая точка </span><span id="t98_1" style="letter-spacing:-0.083px;">1 </span><span id="t98_2" style="font-size:13px;letter-spacing:-0.569px;">TT0001</span></span>
<span id="t99" class="t ls" style="top:287px;font-size:14px;line-height:20px;color:#000;right:1002px;">2</span>
<span id="t100" class="t ls" style="top:287px;font-size:14.5px;line-height:20px;color:#000;letter-spacing:0.034px;left:82.5px;">Торговая точка 2</span>
<span id="t101" class="t ls" style="top:287px;font-size:14px;line-height:20px;color:#000;letter-spacing:-0.350px;left:279px;transform:translateX(-50%);margin-left:-0.175px;">TT0002</span>
<span id="t102" class="t ls" style="top:287px;font-size:14px;line-height:20px;color:#000;letter-spacing:0.138px;right:649.862px;">20 000,00</span>
<span id="t103" class="t ls" style="top:287px;font-size:14px;line-height:20px;color:#000;letter-spacing:0.100px;right:570.9px;">5 000,00</span>
<span id="t104" class="t ls" style="top:287px;font-size:14px;line-height:20px;color:#000;letter-spacing:0.138px;right:491.862px;">14 000,00</span>
<span id="t105" class="t ls" style="top:287px;font-size:14px;line-height:20px;color:#000;letter-spacing:0.100px;right:412.9px;">3 500,00</span>
<span id="t106" class="t ls" style="top:287px;font-size:14px;line-height:20px;color:#000;letter-spacing:0.138px;right:333.862px;">12 600,00</span>
<span id="t107" class="t ls" style="top:287px;font-size:14px;line-height:20px;color:#000;letter-spacing:0.138px;right:262.862px;">75 250,00</span>
<span id="t108" class="t ls" style="top:288.3px;font-size:13.5px;line-height:19px;color:#000;left:822px;"><span id="t108_0" style="letter-spacing:-0.018px;">Торговая точка </span><span id="t108_1" style="letter-spacing:-0.083px;">2 </span><span id="t108_2" style="font-size:13px;letter-spacing:-0.569px;">TT0002</span></span>
<span id="t109" class="t ls" style="top:308px;font-size:14px;line-height:20px;color:#000;right:1002px;">3</span>
<span id="t110" class="t ls" style="top:308px;font-size:14.5px;line-height:20px;color:#000;letter-spacing:0.034px;left:82.5px;">Торговая точка 3</span>
<span id="t111" class="t ls" style="top:308px;font-size:14px;line-height:20px;color:#000;letter-spacing:-0.350px;left:279px;transform:translateX(-50%);margin-left:-0.175px;">TT0003</span>
<span id="t112" class="t ls" style="top:308px;font-size:14px;line-height:20px;color:#000;letter-spacing:0.138px;right:649.862px;">10 000,00</span>
<span id="t113" class="t ls" style="top:308px;font-size:14px;line-height:20px;color:#000;letter-spacing:0.138px;right:570.862px;">10 000,00</span>
<span id="t114" class="t ls" style="top:308px;font-size:14px;line-height:20px;color:#000;letter-spacing:0.100px;right:491.9px;">7 000,00</span>
<span id="t115" class="t ls" style="top:308px;font-size:14px;line-height:20px;color:#000;letter-spacing:0.100px;right:412.9px;">7 000,00</span>
<span id="t116" class="t ls" style="top:308px;font-size:14px;line-height:20px;color:#000;letter-spacing:0.100px;right:333.9px;">6 300,00</span>
<span id="t117" class="t ls" style="top:308px;font-size:14px;line-height:20px;color:#000;letter-spacing:0.138px;right:262.862px;">55 100,00</span>
<span id="t118" class="t ls" style="top:309.3px;font-size:13.5px;line-height:19px;color:#000;left:822px;"><span id="t118_0" style="letter-spacing:-0.018px;">Торговая точка </span><span id="t118_1" style="letter-spacing:-0.083px;">3 </span><span id="t118_2" style="font-size:13px;letter-spacing:-0.569px;">TT0003</span></span>
<span id="t119" class="t ls" style="top:329px;font-size:14px;line-height:20px;color:#000;right:1002px;">4</span>
<span id="t120" class="t ls" style="top:329px;font-size:14.5px;line-height:20px;color:#000;letter-spacing:0.034px;left:82.5px;">Торговая точка 4</span>
<span id="t121" class="t ls" style="top:329px;font-size:14px;line-height:20px;color:#000;letter-spacing:-0.350px;left:279px;transform:translateX(-50%);margin-left:-0.175px;">TT0004</span>
<span id="t122" class="t ls" style="top:329px;font-size:14px;line-height:20px;color:#000;letter-spacing:0.100px;right:649.9px;">5 000,00</span>
<span id="t123" class="t ls" style="top:329px;font-size:14px;line-height:20px;color:#000;letter-spacing:0.138px;right:570.862px;">20 000,00</span>
<span id="t124" class="t ls" style="top:329px;font-size:14px;line-height:20px;color:#000;letter-spacing:0.100px;right:491.9px;">3 500,00</span>
<span id="t125" class="t ls" style="top:329px;font-size:14px;line-height:20px;color:#000;letter-spacing:0.138px;right:412.862px;">14 000,00</span>
<span id="t126" class="t ls" style="top:329px;font-size:14px;line-height:20px;color:#000;letter-spacing:0.100px;right:333.9px;">3 150,00</span>
<span id="t127" class="t ls" style="top:329px;font-size:14px;line-height:20px;color:#000;letter-spacing:0.138px;right:262.862px;">62 500,00</span>
<span id="t128" class="t ls" style="top:330.3px;font-size:13.5px;line-height:19px;color:#000;left:822px;"><span id="t128_0" style="letter-spacing:-0.018px;">Торговая точка </span><span id="t128_1" style="letter-spacing:-0.083px;">4 </span><span id="t128_2" style="font-size:13px;letter-spacing:-0.569px;">TT0004</span></span>
<span id="t129" class="t ls" style="top:350px;font-size:14px;line-height:20px;color:#000;right:1002px;">5</span>
<span id="t130" class="t ls" style="top:350px;font-size:14.5px;line-height:20px;color:#000;letter-spacing:0.034px;left:82.5px;">Торговая точка 5</span>
<span id="t131" class="t ls" style="top:350px;font-size:14px;line-height:20px;color:#000;letter-spacing:-0.350px;left:279px;transform:translateX(-50%);margin-left:-0.175px;">TT0005</span>
<span id="t132" class="t ls" style="top:350px;font-size:14px;line-height:20px;color:#000;letter-spacing:0.100px;right:649.9px;">6 000,00</span>
<span id="t133" class="t ls" style="top:350px;font-size:14px;line-height:20px;color:#000;letter-spacing:0.138px;right:570.862px;">15 000,00</span>
<span id="t134" class="t ls" style="top:350px;font-size:14px;line-height:20px;color:#000;letter-spacing:0.100px;right:491.9px;">4 200,00</span>
<span id="t135" class="t ls" style="top:350px;font-size:14px;line-height:20px;color:#000;letter-spacing:0.138px;right:412.862px;">10 500,00</span>
<span id="t136" class="t ls" style="top:350px;font-size:14px;line-height:20px;color:#000;letter-spacing:0.100px;right:333.9px;">3 780,00</span>
<span id="t137" class="t ls" style="top:350px;font-size:14px;line-height:20px;color:#000;letter-spacing:0.138px;right:262.862px;">54 030,00</span>
<span id="t138" class="t ls" style="top:351.3px;font-size:13.5px;line-height:19px;color:#000;left:822px;"><span id="t138_0" style="letter-spacing:-0.018px;">Торговая точка </span><span id="t138_1" style="letter-spacing:-0.083px;">5 </span><span id="t138_2" style="font-size:13px;letter-spacing:-0.569px;">TT0005</span></span>
<span id="t139" class="t ls" style="top:371px;font-size:14px;line-height:20px;color:#000;right:1002px;">6</span>
<span id="t140" class="t ls" style="top:371px;font-size:14.5px;line-height:20px;color:#000;letter-spacing:0.034px;left:82.5px;">Торговая точка 6</span>
<span id="t141" class="t ls" style="top:371px;font-size:14px;line-height:20px;color:#000;letter-spacing:-0.350px;left:279px;transform:translateX(-50%);margin-left:-0.175px;">TT0006</span>
<span id="t142" class="t ls" style="top:371px;font-size:14px;line-height:20px;color:#000;letter-spacing:0.138px;right:649.862px;">15 000,00</span>
<span id="t143" class="t ls" style="top:371px;font-size:14px;line-height:20px;color:#000;letter-spacing:0.100px;right:570.9px;">6 000,00</span>
<span id="t144" class="t ls" style="top:371px;font-size:14px;line-height:20px;color:#000;letter-spacing:0.138px;right:491.862px;">10 500,00</span>
<span id="t145" class="t ls" style="top:371px;font-size:14px;line-height:20px;color:#000;letter-spacing:0.100px;right:412.9px;">4 200,00</span>
<span id="t146" class="t ls" style="top:371px;font-size:14px;line-height:20px;color:#000;letter-spacing:0.100px;right:333.9px;">9 450,00</span>
<span id="t147" class="t ls" style="top:371px;font-size:14px;line-height:20px;color:#000;letter-spacing:0.138px;right:262.862px;">61 680,00</span>
<span id="t148" class="t ls" style="top:372.3px;font-size:13.5px;line-height:19px;color:#000;left:822px;"><span id="t148_0" style="letter-spacing:-0.018px;">Торговая точка </span><span id="t148_1" style="letter-spacing:-0.083px;">6 </span><span id="t148_2" style="font-size:13px;letter-spacing:-0.569px;">TT0006</span></span>
<span id="t149" class="t ls" style="top:392px;font-size:14px;line-height:20px;color:#000;right:1002px;">7</span>
<span id="t150" class="t ls" style="top:392px;font-size:14.5px;line-height:20px;color:#000;letter-spacing:0.034px;left:82.5px;">Торговая точка 7</span>
<span id="t151" class="t ls" style="top:392px;font-size:14px;line-height:20px;color:#000;letter-spacing:-0.350px;left:279px;transform:translateX(-50%);margin-left:-0.175px;">TT0007</span>
<span id="t152" class="t ls" style="top:392px;font-size:14px;line-height:20px;color:#000;letter-spacing:0.138px;right:649.862px;">10 000,00</span>
<span id="t153" class="t ls" style="top:392px;font-size:14px;line-height:20px;color:#000;letter-spacing:0.138px;right:570.862px;">10 000,00</span>
<span id="t154" class="t ls" style="top:392px;font-size:14px;line-height:20px;color:#000;letter-spacing:0.100px;right:491.9px;">7 000,00</span>
<span id="t155" class="t ls" style="top:392px;font-size:14px;line-height:20px;color:#000;letter-spacing:0.100px;right:412.9px;">7 000,00</span>
<span id="t156" class="t ls" style="top:392px;font-size:14px;line-height:20px;color:#000;letter-spacing:0.100px;right:333.9px;">6 300,00</span>
<span id="t157" class="t ls" style="top:392px;font-size:14px;line-height:20px;color:#000;letter-spacing:0.138px;right:262.862px;">55 100,00</span>
<span id="t158" class="t ls" style="top:393.3px;font-size:13.5px;line-height:19px;color:#000;left:822px;"><span id="t158_0" style="letter-spacing:-0.018px;">Торговая точка </span><span id="t158_1" style="letter-spacing:-0.083px;">7 </span><span id="t158_2" style="font-size:13px;letter-spacing:-0.569px;">TT0007</span></span>
<div style="left:204px;top:452px;width:150px;height:139px;background:#d2d2d2;"></div>
<div style="left:204px;top:471px;width:150px;height:1px;background:#bdbdbd;"></div>
<div style="left:204px;top:491px;width:150px;height:1px;background:#bdbdbd;"></div>
<div style="left:204px;top:511px;width:150px;height:1px;background:#bdbdbd;"></div>
<div style="left:204px;top:531px;width:150px;height:1px;background:#bdbdbd;"></div>
<div style="left:204px;top:551px;width:150px;height:1px;background:#bdbdbd;"></div>
<div style="left:204px;top:571px;width:150px;height:1px;background:#bdbdbd;"></div>
<span id="t159" class="t ls" style="top:432.5px;font-size:13.5px;line-height:19px;color:#000;letter-spacing:0.096px;left:206px;">Название Код торговой точки</span>
<span id="t160" class="t ls" style="top:452.5px;font-size:13.5px;line-height:19px;color:#000;left:206px;max-width:150px;overflow:hidden;"><span id="t160_0" style="letter-spacing:-0.018px;">Торговая точка </span><span id="t160_1" style="letter-spacing:-0.083px;">1 </span><span id="t160_2" style="font-size:13px;letter-spacing:-0.569px;">TT0001</span></span>
<span id="t161" class="t ls" style="top:472.5px;font-size:13.5px;line-height:19px;color:#000;left:206px;max-width:150px;overflow:hidden;"><span id="t161_0" style="letter-spacing:-0.018px;">Торговая точка </span><span id="t161_1" style="letter-spacing:-0.083px;">2 </span><span id="t161_2" style="font-size:13px;letter-spacing:-0.569px;">TT0002</span></span>
<span id="t162" class="t ls" style="top:492.5px;font-size:13.5px;line-height:19px;color:#000;left:206px;max-width:150px;overflow:hidden;"><span id="t162_0" style="letter-spacing:-0.018px;">Торговая точка </span><span id="t162_1" style="letter-spacing:-0.083px;">3 </span><span id="t162_2" style="font-size:13px;letter-spacing:-0.569px;">TT0003</span></span>
<span id="t163" class="t ls" style="top:512.5px;font-size:13.5px;line-height:19px;color:#000;left:206px;max-width:150px;overflow:hidden;"><span id="t163_0" style="letter-spacing:-0.018px;">Торговая точка </span><span id="t163_1" style="letter-spacing:-0.083px;">4 </span><span id="t163_2" style="font-size:13px;letter-spacing:-0.569px;">TT0004</span></span>
<span id="t164" class="t ls" style="top:532.5px;font-size:13.5px;line-height:19px;color:#000;left:206px;max-width:150px;overflow:hidden;"><span id="t164_0" style="letter-spacing:-0.018px;">Торговая точка </span><span id="t164_1" style="letter-spacing:-0.083px;">5 </span><span id="t164_2" style="font-size:13px;letter-spacing:-0.569px;">TT0005</span></span>
<span id="t165" class="t ls" style="top:552.5px;font-size:13.5px;line-height:19px;color:#000;left:206px;max-width:150px;overflow:hidden;"><span id="t165_0" style="letter-spacing:-0.018px;">Торговая точка </span><span id="t165_1" style="letter-spacing:-0.083px;">6 </span><span id="t165_2" style="font-size:13px;letter-spacing:-0.569px;">TT0006</span></span>
<span id="t166" class="t ls" style="top:572.5px;font-size:13.5px;line-height:19px;color:#000;left:206px;max-width:150px;overflow:hidden;"><span id="t166_0" style="letter-spacing:-0.018px;">Торговая точка </span><span id="t166_1" style="letter-spacing:-0.083px;">7 </span><span id="t166_2" style="font-size:13px;letter-spacing:-0.569px;">TT0007</span></span>
<svg style="left:0px;top:0px;" width="1080" height="712" viewBox="0 0 1080 712"><rect x="203.75" y="431.55" width="150" height="159.7" fill="none" stroke="#0d6e40" stroke-width="3.1"/><rect x="204.45" y="432.25" width="148.6" height="158.3" fill="none" stroke="#fff" stroke-width="1.7" stroke-dasharray="2 7" stroke-dashoffset="-3"/><rect x="350.6" y="588.8" width="5.6" height="5.4" fill="#0d6e40" stroke="#fff" stroke-width="1"/></svg>
<div style="left:1057px;top:204px;width:23px;height:457px;background:#e6e6e6;"></div>
<div style="left:1057px;top:223px;width:1px;height:438px;background:#b4b4b4;"></div>
<div style="left:1061px;top:221px;width:15px;height:427px;background:#d2d2d2;"></div>
<div style="left:1061px;top:206px;width:15px;height:15px;background:#fff;box-sizing:border-box;border:1px solid #ababab;"></div>
<div style="left:1061px;top:221px;width:15px;height:405px;background:#fff;box-sizing:border-box;border:1px solid #ababab;"></div>
<div style="left:1061px;top:647px;width:15px;height:14px;background:#fff;box-sizing:border-box;border:1px solid #ababab;"></div>
<svg style="left:1061px;top:206px;" width="15" height="15" viewBox="0 0 15 15"><path d="M4 9.5h7l-3.5-4z" fill="#666"/></svg>
<svg style="left:1061px;top:647px;" width="15" height="14" viewBox="0 0 15 14"><path d="M4 5h7l-3.5 4z" fill="#666"/></svg>
<div style="left:0px;top:661px;width:1080px;height:29px;background:#e6e6e6;"></div>
<div style="left:0px;top:661px;width:1058px;height:1px;background:#9f9f9f;"></div>
<div style="left:101px;top:661px;width:107px;height:25px;background:#fff;"></div>
<div style="left:101px;top:684px;width:107px;height:2px;background:#047643;"></div>
<span id="t167" class="t ls" style="top:666px;font-size:13px;line-height:18px;color:#0b6238;font-weight:700;letter-spacing:-0.212px;left:154.6px;transform:translateX(-50%);margin-left:-0.106px;">microexcel.ru</span>
<svg style="left:0px;top:661px;" width="680" height="29" viewBox="0 0 680 29"><path d="M32.5 10.5v7l-4-3.5zM57 10.5v7l4-3.5z" fill="#c2c2c2"/><circle cx="249" cy="14.2" r="7" fill="none" stroke="#777" stroke-width="1.1"/><path d="M245 14.2h8M249 10.2v8" stroke="#777" stroke-width="1.3"/><path d="M647.7 9.2h1.9v1.9h-1.9zM647.7 13.2h1.9v1.9h-1.9zM647.7 17.2h1.9v1.9h-1.9z" fill="#a0a0a0"/></svg>
<div style="left:665px;top:668px;width:394px;height:15px;background:#d4d4d4;"></div>
<div style="left:665px;top:668px;width:15px;height:15px;background:#fff;box-sizing:border-box;border:1px solid #ababab;"></div>
<div style="left:679px;top:668px;width:333px;height:15px;background:#fff;box-sizing:border-box;border:1px solid #ababab;"></div>
<div style="left:1045px;top:668px;width:15px;height:15px;background:#fff;box-sizing:border-box;border:1px solid #ababab;"></div>
<svg style="left:665px;top:668px;" width="15" height="15" viewBox="0 0 15 15"><path d="M9.3 4v7l-4-3.5z" fill="#666"/></svg>
<svg style="left:1045px;top:668px;" width="15" height="15" viewBox="0 0 15 15"><path d="M5.7 4v7l4-3.5z" fill="#666"/></svg>
<div style="left:0px;top:690px;width:1080px;height:22px;background:#f3f3f3;"></div>
<div style="left:0px;top:689px;width:1080px;height:1px;background:#cfcfcf;"></div>
<span id="t168" class="t ls" style="top:692.3px;font-size:11.5px;line-height:16px;color:#333;letter-spacing:0.026px;left:8px;">Укажите ячейку и нажмите ВВОД или выберите "Вставить"</span>
<span id="t169" class="t ls" style="top:692.3px;font-size:11.5px;line-height:16px;color:#333;letter-spacing:-0.046px;left:686.4px;">Количество: 8</span>
<div style="left:779px;top:690px;width:38px;height:21px;background:#c6c6c6;"></div>
<span id="t170" class="t ls" style="top:692.3px;font-size:11.5px;line-height:16px;color:#333;letter-spacing:-0.527px;left:1030.2px;">100 %</span>
<svg style="left:780px;top:690px;" width="300" height="22" viewBox="0 0 300 22"><path d="M11.5 4h12v12h-12zM15.5 4v12M19.5 4v12M11.5 8h12M11.5 12h12" fill="none" stroke="#6a6a6a" stroke-width="1.1"/><path d="M50 4h13v12h-13z" fill="none" stroke="#6a6a6a" stroke-width="1.1"/><path d="M52.8 6.4h7.4v7.4h-7.4z" fill="none" stroke="#6a6a6a" stroke-width="1"/><path d="M54.4 8.6h4.2M54.4 10.2h4.2M54.4 11.8h4.2" stroke="#6a6a6a" stroke-width=".8"/><path d="M87.6 4h13v12h-13z" fill="none" stroke="#6a6a6a" stroke-width="1.1"/><path d="M91.5 4v5h5v-5" fill="none" stroke="#6a6a6a" stroke-width="1.1"/><path d="M118 9.8h6" stroke="#6a6a6a" stroke-width="1.6"/><path d="M128 9.8h100" stroke="#9a9a9a" stroke-width="1"/><rect x="176.2" y="4.2" width="4.6" height="11" fill="#6a6a6a"/><path d="M231.8 9.8h6.8M235.2 6.4v6.8" stroke="#6a6a6a" stroke-width="1.6"/></svg>
<div style="left:0px;top:710px;width:1080px;height:2px;background:#5e5e5e;"></div>
<svg style="left:0px;top:0px;" width="1080" height="712" viewBox="0 0 1080 712"><rect x="4.25" y="62.75" width="60.6" height="60.2" rx="7.75" fill="none" stroke="#d61c1c" stroke-width="3.5"/><rect x="71.75" y="236.85" width="135.2" height="180.7" rx="7.75" fill="none" stroke="#d61c1c" stroke-width="3.5"/></svg>
<div style="left:0px;top:0px;width:1px;height:65px;background:#0a5c36;"></div>
<div style="left:0px;top:65px;width:1px;height:647px;background:#6f6f6f;"></div>
<div style="left:1077px;top:158px;width:3px;height:552px;background:rgba(0,0,0,.09);"></div>

</div>
</body>
</html>
